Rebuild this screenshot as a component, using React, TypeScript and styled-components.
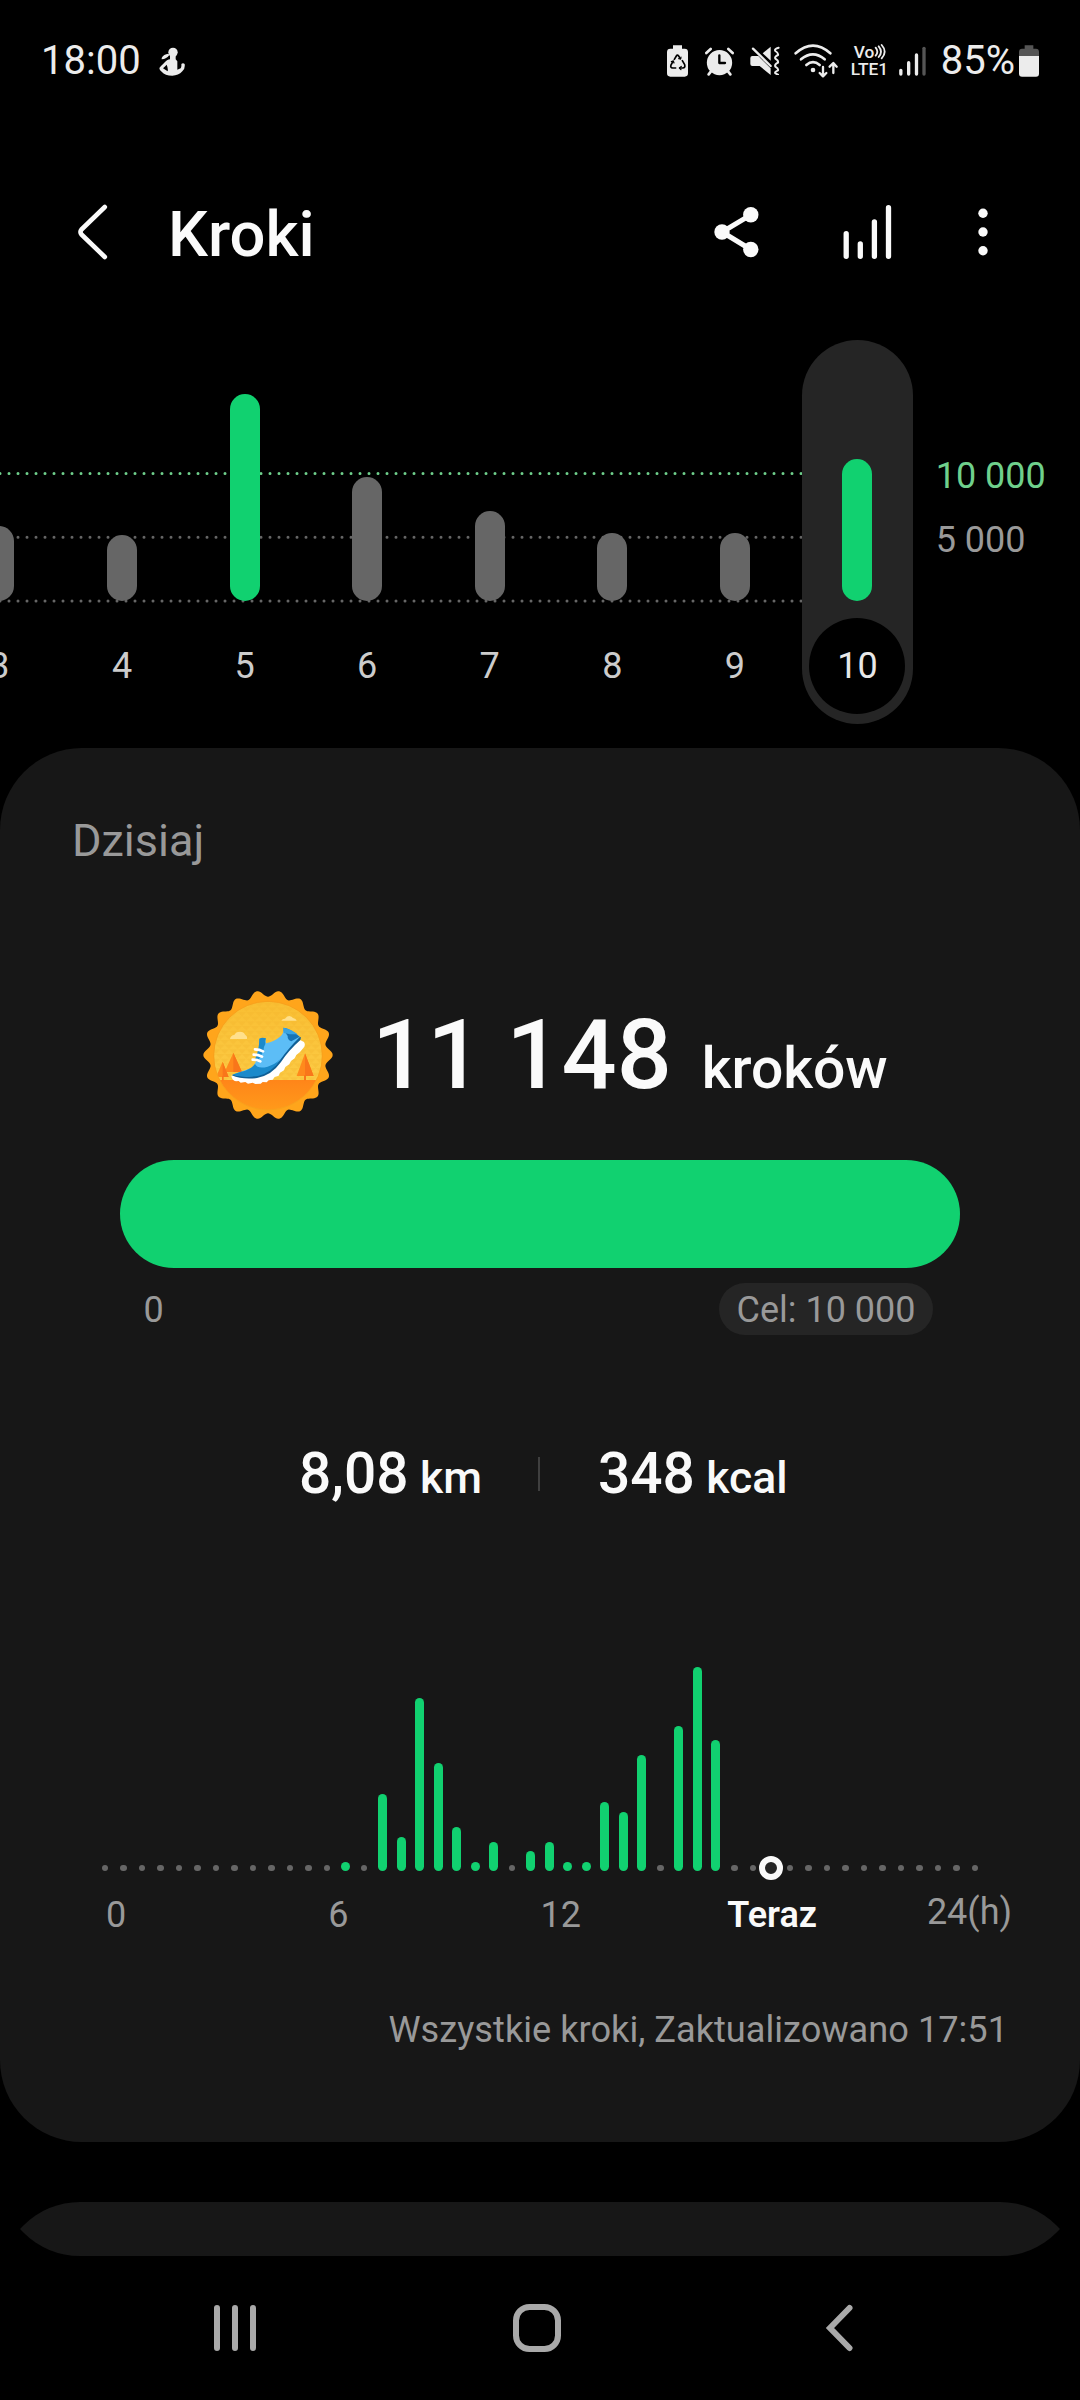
import React from "react";
import styled, { createGlobalStyle } from "styled-components";

const GREEN = "#11d170";
const CARD = "#171717";
const PILL = "#252525";
const MUTED = "#999999";
const WHITE = "#fafafa";

const GlobalStyle = createGlobalStyle`
  * { box-sizing: border-box; }
  html, body { margin: 0; padding: 0; background: #000; }
  body { font-family: Roboto, "Liberation Sans", sans-serif; }
  svg { display: block; flex: none; }
`;

const Page = styled.div`
  width: 1080px;
  height: 2400px;
  display: flex;
  flex-direction: column;
  overflow: hidden;
  background: #000;
  color: ${WHITE};
`;

/* ---------- status bar ---------- */

const StatusBar = styled.header`
  height: 120px;
  flex: none;
  display: flex;
  align-items: center;
  justify-content: space-between;
  padding: 0 41px;
  color: #ececec;
  font-size: 40px;
  line-height: 48px;
`;

const StatusGroup = styled.div`
  display: flex;
  align-items: center;
`;

const StatusText = styled.span<{ $gap?: number }>`
  margin-left: ${(p) => p.$gap ?? 0}px;
  padding-top: 2px;
`;

const IconSlot = styled.span<{ $gap: number; $drop?: number }>`
  display: flex;
  margin-left: ${(p) => p.$gap}px;
  padding-top: ${(p) => p.$drop ?? 0}px;
`;

const Volte = styled.span`
  display: flex;
  flex-direction: column;
  width: 37px;
  margin-left: 13px;
  padding-top: 2px;
  font-size: 17.3px;
  font-weight: 500;
  line-height: 17.5px;
`;

const VolteTop = styled.span`
  display: flex;
  align-items: center;
  padding-left: 3px;
`;

const MeditationIcon = () => (
  <svg width="26" height="29" viewBox="475 79 78 87" fill="#ececec">
    <circle cx="517" cy="95" r="14" />
    <path d="M483 112q6-12 20-13l3 4q-8 12-23 13z" />
    <path d="M508 104h17v12l5 6v25l10-4q3-6 2-13 5-4 10 0 2 14-7 22-12 13-30 13-22 0-32-12-7-5-7-11 4-6 12-13 12-13 20-13zM492 138l-5 5 14 9q2-8-3-20z" fillRule="evenodd" />
  </svg>
);

const RecycleBatteryIcon = () => (
  <svg width="21" height="32" viewBox="81 75 63 96">
    <path fill="#ececec" d="M99 76h27v10h8q10 0 10 10v64q0 10-10 10H91q-10 0-10-10V96q0-10 10-10h8z" />
    <g fill="none" stroke="#000" strokeWidth="5" strokeLinecap="round" strokeLinejoin="round">
      <path d="M103 118l6-10q3-5 7 0l5 8" />
      <path d="M127 122l7 12q3 9-6 10h-9" />
      <path d="M107 144h-9q-8-1-5-9l6-11" />
      <path d="M94 125l6-2 2 6M124 139l-6 5 5 5M123 111l-1 6-6-1" strokeWidth="3.5" />
    </g>
  </svg>
);

const AlarmIcon = () => (
  <svg width="29" height="29" viewBox="195 79 87 87">
    <g stroke="#ececec" strokeWidth="8" strokeLinecap="round">
      <path d="M199 97l13-12M278 97l-13-12M213 152l-7 9M264 152l7 9" />
    </g>
    <circle cx="238.500" cy="126" r="38" fill="#ececec" />
    <path d="M238 104v23h17" fill="none" stroke="#000" strokeWidth="7" strokeLinecap="round" strokeLinejoin="round" />
  </svg>
);

const MuteIcon = () => (
  <svg width="30" height="29" viewBox="329 78 90 87">
    <path fill="#ececec" d="M336 108h18l37 37v20l-33-27h-22q-6 0-6-6v-18q0-6 6-6z" />
    <path fill="#ececec" d="M391 80v42l-24-22z" />
    <path d="M338 86l53 52" stroke="#ececec" strokeWidth="7" strokeLinecap="round" />
    <path d="M415 83q-14 4-10 10 10 6 8 12-11 5-8 11 10 6 8 12-11 5-8 12 10 6 8 11-11 5-8 9l8 4" fill="none" stroke="#ececec" strokeWidth="6" strokeLinecap="round" />
  </svg>
);

const WifiIcon = () => (
  <svg width="44" height="34" viewBox="460 71 132 102">
    <g fill="none" stroke="#ececec" strokeWidth="8" strokeLinecap="round">
      <path d="M465 99q52-46 104 0" />
      <path d="M481 117q36-30 71 0" />
      <path d="M497 134q20-17 40 0" />
    </g>
    <circle cx="517" cy="149" r="7" fill="#ececec" />
    <g fill="none" stroke="#ececec" strokeWidth="7" strokeLinecap="round" strokeLinejoin="round">
      <path d="M547 140v27M537 158l10 10 10-10" />
      <path d="M578 158v-28M567 139l11-11 10 11" />
    </g>
  </svg>
);

const WavesIcon = () => (
  <svg width="12" height="16" viewBox="702 78 36 48" fill="none" stroke="#ececec" strokeWidth="5.500" strokeLinecap="round">
    <path d="M707 89q10 12 0 24M716 85q14 16 0 32M725 81q18 20 0 40" />
  </svg>
);

const SignalIcon = () => (
  <svg width="27" height="30" viewBox="774 76 81 90" strokeWidth="10" strokeLinecap="round">
    <path stroke="#ececec" d="M779.500 149v11M803 126v34M826.500 103v57" />
    <path stroke="#555" d="M849 83v77" />
  </svg>
);

const BatteryIcon = () => (
  <svg width="20" height="32" viewBox="1137 75 60 96">
    <path fill="#555" d="M1154 76h26v10h8q9 0 9 10v12h-60V96q0-10 9-10h8z" />
    <path fill="#ececec" d="M1137 108h60v53q0 9-9 9h-42q-9 0-9-9z" />
  </svg>
);

/* ---------- title bar ---------- */

const TitleBar = styled.nav`
  height: 220px;
  flex: none;
  display: flex;
  align-items: center;
  padding: 4px 92px 0 77px;
`;

const Title = styled.h1`
  margin: 0 auto 0 60px;
  padding-top: 4px;
  font-size: 63.3px;
  font-weight: 500;
  line-height: 72px;
`;

const Actions = styled.div`
  display: flex;
  align-items: center;
`;

const Action = styled.span<{ $gap?: number }>`
  display: flex;
  margin-left: ${(p) => p.$gap ?? 0}px;
`;

const BackIcon = () => (
  <svg width="31" height="56" viewBox="0 0 31 56" fill="none" stroke={WHITE} strokeWidth="4.600" strokeLinecap="round" strokeLinejoin="round">
    <path d="M27.800 3L4.500 25.500Q2.500 28 4.500 30.500L27.800 53" />
  </svg>
);

const ShareIcon = () => (
  <svg width="45" height="52" viewBox="0 0 45 52" fill={WHITE}>
    <path d="M36.800 8.800L8 26l28.800 17.500" fill="none" stroke={WHITE} strokeWidth="5" />
    <circle cx="8" cy="26" r="7.700" />
    <circle cx="36.800" cy="8.700" r="7.700" />
    <circle cx="36.800" cy="43.500" r="7.700" />
  </svg>
);

const BarsIcon = () => (
  <svg width="49" height="56" viewBox="0 0 49 56" stroke={WHITE} strokeWidth="5.300" strokeLinecap="round">
    <path d="M3.200 29.700v22.600M17.300 40v12.300M31.400 17.800v34.500M45.500 3.700v48.600" />
  </svg>
);

const MoreIcon = () => (
  <svg width="10" height="56" viewBox="0 0 10 56" fill={WHITE}>
    <circle cx="5" cy="9.300" r="4.700" />
    <circle cx="5" cy="28" r="4.700" />
    <circle cx="5" cy="46.700" r="4.700" />
  </svg>
);

/* ---------- weekly chart ---------- */

const Week = styled.section`
  position: relative;
  height: 408px;
  flex: none;
  display: flex;
  align-items: flex-start;
`;

const GridLines = styled.svg`
  position: absolute;
  left: 0;
  top: 0;
`;

const Days = styled.div`
  position: relative;
  display: flex;
  flex: none;
  margin-left: -61.8px;
`;

const DayColumn = styled.div`
  width: 122.57px;
  display: flex;
  justify-content: center;
`;

const DayTrack = styled.div<{ $selected: boolean }>`
  width: 110.5px;
  height: 384px;
  border-radius: 56px;
  display: flex;
  flex-direction: column;
  align-items: center;
  background: ${(p) => (p.$selected ? PILL : "transparent")};
`;

const DayBarArea = styled.div`
  height: 261px;
  display: flex;
  align-items: flex-end;
`;

const DayBar = styled.div<{ $height: number; $goal: boolean }>`
  width: 30px;
  height: ${(p) => p.$height}px;
  border-radius: 15px;
  background: ${(p) => (p.$goal ? GREEN : "#666666")};
`;

const DayLabel = styled.div<{ $selected: boolean }>`
  width: 96px;
  height: 96px;
  margin-top: 16.5px;
  padding-top: 1px;
  border-radius: 50%;
  display: flex;
  align-items: center;
  justify-content: center;
  font-size: 36px;
  color: ${(p) => (p.$selected ? "#e8e8e8" : "#cccccc")};
  background: ${(p) => (p.$selected ? "#000" : "transparent")};
`;

const Scale = styled.div`
  flex: none;
  margin: 104px 0 0 17px;
  font-size: 36px;
  line-height: 64px;
`;

const ScaleMark = styled.div<{ $goal?: boolean }>`
  color: ${(p) => (p.$goal ? "#6fd08c" : MUTED)};
`;

const days = [
  { day: 3, height: 75 },
  { day: 4, height: 66 },
  { day: 5, height: 207, goal: true },
  { day: 6, height: 124.5 },
  { day: 7, height: 90.5 },
  { day: 8, height: 68 },
  { day: 9, height: 68 },
  { day: 10, height: 142, goal: true, selected: true },
];

/* ---------- today card ---------- */

const Card = styled.main`
  height: 1394px;
  flex: none;
  display: flex;
  flex-direction: column;
  padding-top: 63px;
  border-radius: 82px;
  background: ${CARD};
`;

const CardTitle = styled.h2`
  margin: 0 0 118px 72px;
  font-size: 45px;
  font-weight: 400;
  line-height: 60px;
  color: ${MUTED};
`;

const Hero = styled.div`
  display: flex;
  align-items: center;
  height: 132px;
  padding-left: 202px;
`;

const StepCount = styled.div`
  margin-left: 38px;
  font-size: 97px;
  font-weight: 500;
  line-height: 132px;
  white-space: nowrap;
`;

const StepUnit = styled.span`
  margin-left: 30px;
  font-size: 57px;
  line-height: 1;
`;

const Progress = styled.div`
  height: 108px;
  margin: 39px 120px 0;
  border-radius: 54px;
  background: ${GREEN};
`;

const ProgressScale = styled.div`
  display: flex;
  justify-content: space-between;
  align-items: center;
  height: 52px;
  margin: 15px 147px 0 143.5px;
  font-size: 36px;
  color: ${MUTED};
`;

const StartValue = styled.span`
  padding-top: 2px;
`;

const GoalChip = styled.span`
  height: 52px;
  width: 214px;
  display: flex;
  align-items: center;
  justify-content: center;
  padding-top: 1px;
  border-radius: 26px;
  background: ${PILL};
`;

const Stats = styled.div`
  display: flex;
  align-items: center;
  height: 70px;
  margin-top: 104px;
  font-weight: 500;
  font-size: 56.8px;
  line-height: 70px;
`;

const Stat = styled.div<{ $align: "left" | "right" }>`
  flex: 1;
  text-align: ${(p) => p.$align};
  padding: ${(p) => (p.$align === "right" ? "0 56px 0 0" : "0 0 0 58px")};
`;

const StatUnit = styled.span`
  margin-left: 11.5px;
  font-size: 44.5px;
  line-height: 1;
`;

const StatDivider = styled.div`
  width: 2px;
  height: 34px;
  background: #3f3f3f;
`;

const Hours = styled.div`
  display: flex;
  align-items: flex-end;
  height: 210px;
  margin: 152px 0 0 95.7px;
`;

const HourSlot = styled.div`
  width: 18.52px;
  display: flex;
  justify-content: center;
`;

const HourBar = styled.div<{ $height: number }>`
  width: 9px;
  height: ${(p) => p.$height}px;
  border-radius: 5px;
  background: ${GREEN};
`;

const HourDot = styled.div`
  width: 6.4px;
  height: 6.4px;
  border-radius: 50%;
  background: #666666;
`;

const NowRing = styled.div`
  flex: none;
  width: 24px;
  height: 24px;
  margin: 0 1px -9px 0;
  border: 6px solid ${WHITE};
  border-radius: 50%;
  background: ${PILL};
`;

const HourLabels = styled.div`
  display: flex;
  margin: 23px 0 0 5px;
  font-size: 36px;
  line-height: 42px;
  color: ${MUTED};
`;

const HourLabel = styled.div<{ $width: number; $now?: boolean }>`
  width: ${(p) => p.$width}px;
  text-align: center;
  font-weight: ${(p) => (p.$now ? 600 : 400)};
  color: ${(p) => (p.$now ? WHITE : "inherit")};
`;

const EndLabel = styled.div`
  margin: -3px 0 0 54.5px;
`;

const Updated = styled.div`
  margin: 73px 72px 0 0;
  text-align: right;
  font-size: 36.2px;
  line-height: 42px;
  color: ${MUTED};
`;

/* Steps per half hour; null marks an empty slot. */
const halfHours: (number | "now" | null)[] = [
  ...Array(13).fill(null),
  9, null, 77.5, 34, 173.5, 108, 44.5, 9, 29, null, 20.5, 29, 9, 9, 69, 59, 116, null, 145, 204, 131.5,
  null, null, "now",
  ...Array(11).fill(null),
];

/* ---------- badge ---------- */

const scallop = () => {
  const pts: string[] = [];
  const steps = 360;
  for (let i = 0; i < steps; i++) {
    const a = (i / steps) * Math.PI * 2;
    const wave = Math.cos(a * 18);
    const r = 184.5 + 9.5 * wave;
    pts.push(`${(234 + r * Math.cos(a)).toFixed(1)},${(255 + r * Math.sin(a)).toFixed(1)}`);
  }
  return pts.join(" ");
};

const Badge = () => (
  <svg width="132" height="132" viewBox="36 57 396 396">
    <defs>
      <linearGradient id="sky" x1="0" y1="0" x2="0" y2="1">
        <stop offset="0" stopColor="#f9be32" />
        <stop offset="1" stopColor="#fccb45" />
      </linearGradient>
      <linearGradient id="ground" x1="0" y1="0" x2="0" y2="1">
        <stop offset="0" stopColor="#ff8519" />
        <stop offset="1" stopColor="#ff9a1a" />
      </linearGradient>
      <pattern id="tri" width="26" height="28" patternUnits="userSpaceOnUse">
        <path d="M0 0h26l-13 14zM-13 14h26l-13 14zM13 14h26l-13 14z" fill="#f3b52a" opacity=".3" />
      </pattern>
      <clipPath id="disc">
        <circle cx="234" cy="257" r="162" />
      </clipPath>
    </defs>
    <polygon points={scallop()} fill="#ffa51b" />
    <g clipPath="url(#disc)">
      <rect x="70" y="90" width="330" height="242" fill="url(#sky)" />
      <rect x="70" y="90" width="330" height="242" fill="url(#tri)" />
      <rect x="70" y="330" width="330" height="92" fill="url(#ground)" />
      <path fill="#ff8a1c" d="M130 248l26 58h-52zM98 275l18 46H78zM345 250l26 68h-51z" />
      <path fill="#f9761a" d="M130 248l26 58h-26zM98 275l18 46H98zM345 250l26 68h-26zM96 318h5v13h-5zM342 316h6v15h-6z" />
      <path fill="#ffe08c" d="M120 207q2-11 13-12 4-10 17-10 12 0 15 9 8 3 6 13zM274 152q3-6 11-6 5-8 13-8 8 1 11 6 9 2 11 8z" />
    </g>
    <circle cx="234" cy="257" r="163" fill="none" stroke="#f7a01d" strokeWidth="2.500" />
    <path fill="#fff" d="M124 317q2 14 14 17l8-1 6 5 14-2 8 5 14-3 8 4 16-1 6-5 12 1 6-6 12-2 6-8 12-4 4-9 12-7 4-10 12-8 5-10 11-8 5-10 11-9 10-12q8-8 2-18l-12-6-70 60-60 38z" />
    <path fill="#0f5f96" d="M125 316q34 14 76 8 44-8 72-48 22-34 58-66l2-8-16-2-60 66-70 42z" />
    <path fill="#5cbdf6" d="M208 206l18 0 2 14q26-6 42-20 13-10 10-27 20 2 50 27-36 36-58 68-26 38-72 49-36 6-72-3l56-20q19-18 22-48z" />
    <path fill="#1b8acb" d="M208 206q8-5 20-1-4 10-2 17-6 9-6 22l-18 32q-6-2-8-6 14-30 14-64z" />
    <path fill="#1b8acb" d="M126 314q20-7 40-12 20-7 29-20 8 16 38 8 22-6 37-22-22 40-66 50-42 6-78-4z" />
    <path fill="#1673b5" d="M281 173q22 4 48 27l-25 14q-12-4-11-16-6-11-12-14z" />
    <path fill="#38a3e3" d="M281 173q22 4 42 20l-24 0q-10-3-18-4z" />
    <g stroke="#fff" strokeWidth="8" strokeLinecap="round">
      <path d="M195 238q14 0 24 6M191 254q14 0 25 6M188 269q13 0 23 5" fill="none" />
    </g>
  </svg>
);

/* ---------- next card ---------- */

const NextCard = styled.div`
  flex: none;
  height: 54px;
  margin-top: 60px;
`;

const CardCap = styled.div<{ $bottom?: boolean }>`
  height: 27px;
  overflow: hidden;
  display: flex;
  align-items: ${(p) => (p.$bottom ? "flex-end" : "flex-start")};
  &::before {
    content: "";
    flex: 1 0 auto;
    height: 200px;
    border-radius: 80px;
    background: ${CARD};
  }
`;

/* ---------- system navigation ---------- */

const NavBar = styled.footer`
  flex: 1;
  display: flex;
  align-items: flex-start;
  padding: 48px 0 0 213px;
`;

const HomeButton = styled.span`
  display: flex;
  margin: 0 264px 0 256px;
`;

const RecentsIcon = () => (
  <svg width="44" height="48" viewBox="0 0 44 48" stroke="#a9a9a9" strokeWidth="6" strokeLinecap="round">
    <path d="M4 4v40M22 4v40M40 4v40" />
  </svg>
);

const HomeIcon = () => (
  <svg width="48" height="48" viewBox="0 0 48 48" fill="none" stroke="#a9a9a9" strokeWidth="6">
    <rect x="3" y="3" width="42" height="42" rx="13.500" />
  </svg>
);

const NavBackIcon = () => (
  <svg width="29" height="48" viewBox="0 0 29 48" fill="none" stroke="#a9a9a9" strokeWidth="6" strokeLinecap="round">
    <path d="M24.500 4L5 24l19.500 20" />
  </svg>
);

export default function App() {
  return (
    <>
      <GlobalStyle />
      <Page>
        <StatusBar>
          <StatusGroup>
            <StatusText>18:00</StatusText>
            <IconSlot $gap={18} $drop={2}><MeditationIcon /></IconSlot>
          </StatusGroup>
          <StatusGroup>
            <IconSlot $gap={0} $drop={2}><RecycleBatteryIcon /></IconSlot>
            <IconSlot $gap={17} $drop={2}><AlarmIcon /></IconSlot>
            <IconSlot $gap={16} $drop={1}><MuteIcon /></IconSlot>
            <IconSlot $gap={14} $drop={1}><WifiIcon /></IconSlot>
            <Volte>
              <VolteTop>Vo<WavesIcon /></VolteTop>
              <span>LTE1</span>
            </Volte>
            <IconSlot $gap={11} $drop={1}><SignalIcon /></IconSlot>
            <StatusText $gap={15}>85%</StatusText>
            <IconSlot $gap={4} $drop={2}><BatteryIcon /></IconSlot>
          </StatusGroup>
        </StatusBar>

        <TitleBar>
          <BackIcon />
          <Title>Kroki</Title>
          <Actions>
            <Action><ShareIcon /></Action>
            <Action $gap={83.5}><BarsIcon /></Action>
            <Action $gap={86.5}><MoreIcon /></Action>
          </Actions>
        </TitleBar>

        <Week>
          <GridLines width="804" height="270" strokeWidth="3" strokeLinecap="round" strokeDasharray="0.010 8.990">
            <path d="M0 133.500H804" stroke="#6fd08c" />
            <path d="M0 197.300H804M0 261H804" stroke="#666666" />
          </GridLines>
          <Days>
            {days.map((d) => (
              <DayColumn key={d.day}>
                <DayTrack $selected={!!d.selected}>
                  <DayBarArea>
                    <DayBar $height={d.height} $goal={!!d.goal} />
                  </DayBarArea>
                  <DayLabel $selected={!!d.selected}>{d.day}</DayLabel>
                </DayTrack>
              </DayColumn>
            ))}
          </Days>
          <Scale>
            <ScaleMark $goal>10 000</ScaleMark>
            <ScaleMark>5 000</ScaleMark>
          </Scale>
        </Week>

        <Card>
          <CardTitle>Dzisiaj</CardTitle>
          <Hero>
            <Badge />
            <StepCount>
              11 148<StepUnit>kroków</StepUnit>
            </StepCount>
          </Hero>
          <Progress />
          <ProgressScale>
            <StartValue>0</StartValue>
            <GoalChip>Cel: 10 000</GoalChip>
          </ProgressScale>
          <Stats>
            <Stat $align="right">8,08<StatUnit>km</StatUnit></Stat>
            <StatDivider />
            <Stat $align="left">348<StatUnit>kcal</StatUnit></Stat>
          </Stats>
          <Hours>
            {halfHours.map((v, i) => (
              <HourSlot key={i}>
                {v === null ? <HourDot /> : v === "now" ? <NowRing /> : <HourBar $height={v} />}
              </HourSlot>
            ))}
          </Hours>
          <HourLabels>
            <HourLabel $width={222.3}>0</HourLabel>
            <HourLabel $width={222.3}>6</HourLabel>
            <HourLabel $width={222.3}>12</HourLabel>
            <HourLabel $width={200.5} $now>Teraz</HourLabel>
            <EndLabel>24(h)</EndLabel>
          </HourLabels>
          <Updated>Wszystkie kroki, Zaktualizowano 17:51</Updated>
        </Card>

        <NextCard>
          <CardCap />
          <CardCap $bottom />
        </NextCard>

        <NavBar>
          <RecentsIcon />
          <HomeButton><HomeIcon /></HomeButton>
          <NavBackIcon />
        </NavBar>
      </Page>
    </>
  );
}
